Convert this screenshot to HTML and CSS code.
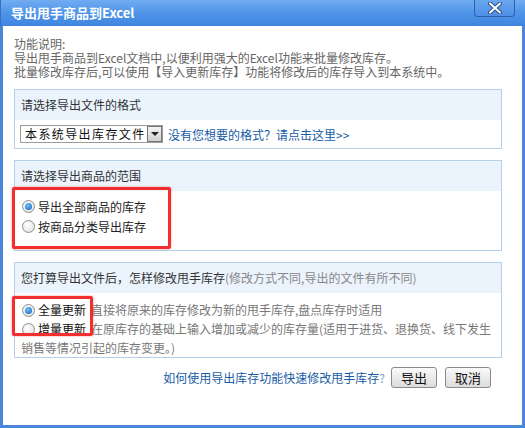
FILE: index.html
```html
<!DOCTYPE html>
<html lang="zh-CN">
<head>
  <meta charset="UTF-8">
  <title>导出甩手商品到Excel</title>
  <link rel="stylesheet" href="styles.css">
</head>
<body>
  <div class="window">
    <div class="titlebar">
      <span class="title">导出甩手商品到Excel</span>
      <a class="close" href="#">
        <svg width="18" height="12" viewBox="0 0 18 12">
          <path d="M4 1.5 L14 10.5 M14 1.5 L4 10.5" stroke="#2b4f86" stroke-width="4" stroke-linecap="round"/>
          <path d="M4 1.5 L14 10.5 M14 1.5 L4 10.5" stroke="#fff" stroke-width="2" stroke-linecap="round"/>
        </svg>
      </a>
    </div>

    <div class="content">
      <div class="intro">
        <p>功能说明:</p>
        <p>导出甩手商品到Excel文档中,以便利用强大的Excel功能来批量修改库存。</p>
        <p>批量修改库存后,可以使用【导入更新库存】功能将修改后的库存导入到本系统中。</p>
      </div>

      <div class="section">
        <div class="section-head">请选择导出文件的格式</div>
        <div class="section-body format-row">
          <div class="select">
            <span class="select-text">本系统导出库存文件</span>
            <span class="select-arrow"></span>
          </div>
          <a class="link" href="#">没有您想要的格式？请点击这里&gt;&gt;</a>
        </div>
      </div>

      <div class="section">
        <div class="section-head">请选择导出商品的范围</div>
        <div class="section-body range-body">
          <label class="option"><span class="radio checked"></span>导出全部商品的库存</label>
          <label class="option"><span class="radio"></span>按商品分类导出库存</label>
          <div class="mark mark-range"></div>
        </div>
      </div>

      <div class="section">
        <div class="section-head">您打算导出文件后，怎样修改甩手库存<span class="hint">(修改方式不同,导出的文件有所不同)</span></div>
        <div class="section-body mode-body">
          <div class="mode"><span class="radio checked"></span><b>全量更新</b><span class="desc">直接将原来的库存修改为新的甩手库存,盘点库存时适用</span></div>
          <div class="mode"><span class="radio"></span><b>增量更新</b><span class="desc">在原库存的基础上输入增加或减少的库存量(适用于进货、退换货、线下发生销售等情况引起的库存变更。)</span></div>
          <div class="mark mark-mode"></div>
        </div>
      </div>

      <div class="footer">
        <a class="link" href="#">如何使用导出库存功能快速修改甩手库存<span class="q">?</span></a>
        <button class="btn">导出</button>
        <button class="btn">取消</button>
      </div>
    </div>
  </div>
</body>
</html>
```

FILE: styles.css
```css
body {
  margin: 0;
  font-family: "Noto Sans CJK SC", "Liberation Sans", sans-serif;
  font-size: 12px;
  color: #333;
}

.window {
  width: 525px;
  height: 428px;
  display: flex;
  flex-direction: column;
  background-color: #4a87da;
}

.titlebar {
  height: 26px;
  display: flex;
  justify-content: space-between;
  align-items: flex-start;
  background: linear-gradient(#72acf2, #4f94e8 50%, #3f86e0);
  border-left: 1px solid #3470c4;
}

.title {
  color: #fff;
  font-weight: bold;
  font-size: 13px;
  line-height: 26px;
  padding-left: 10px;
}

.close {
  width: 41px;
  height: 17px;
  margin-right: 10px;
  box-sizing: border-box;
  display: flex;
  align-items: center;
  justify-content: center;
  border: 1px solid #2f5fa6;
  border-top: none;
  border-radius: 0 0 4px 4px;
  background: linear-gradient(#6aa6f0, #4e90e6);
}

.content {
  flex: 1;
  background-color: #fff;
  margin: 0 3px 3px 3px;
  padding: 11px 20px 0 11px;
}

.intro {
  color: #666;
  margin-bottom: 10px;
}

.intro p {
  margin: 0;
  height: 14px;
  line-height: 14px;
}

.section {
  border: 1px solid #b7cfec;
  margin-bottom: 11px;
}

.section-head {
  background-color: #ebf3fd;
  height: 30px;
  line-height: 30px;
  padding-left: 6px;
  color: #333;
}

.hint {
  color: #888;
}

.section-body {
  position: relative;
}

.format-row {
  display: flex;
  align-items: center;
  padding: 5px 5px;
}

.select {
  display: flex;
  width: 143px;
  height: 18px;
  box-sizing: border-box;
  border: 1px solid #9b9b9b;
  margin-right: 5px;
}

.select-text {
  flex: 1;
  font-size: 12px;
  line-height: 16px;
  padding-left: 4px;
  letter-spacing: 1.4px;
  color: #111;
  white-space: nowrap;
}

.select-arrow {
  width: 15px;
  box-sizing: border-box;
  border: 1px solid #777;
  background: linear-gradient(#f4f4f4, #cfcfcf);
  position: relative;
}

.select-arrow::after {
  content: "";
  position: absolute;
  left: 3px;
  top: 5px;
  border-left: 4px solid transparent;
  border-right: 4px solid transparent;
  border-top: 4px solid #222;
}

.link {
  color: #175ca6;
  text-decoration: none;
}

.range-body {
  padding: 5px 6px 14px 7px;
}

.option {
  display: flex;
  align-items: center;
  height: 20px;
  color: #222;
}

.radio {
  display: inline-block;
  width: 13px;
  height: 13px;
  box-sizing: border-box;
  border: 1px solid #8e8f8f;
  border-radius: 50%;
  background: radial-gradient(circle at 40% 35%, #fff, #dcdcdc);
  margin-right: 3px;
  flex: none;
  position: relative;
}

.radio.checked::after {
  content: "";
  position: absolute;
  left: 2px;
  top: 2px;
  width: 7px;
  height: 7px;
  border-radius: 50%;
  background: radial-gradient(circle at 40% 35%, #6fc2ff, #0a5fb0);
}

.mode-body {
  padding: 7px 6px 0 6px;
  line-height: 19px;
}

.mode .radio {
  vertical-align: -2px;
  margin-left: 1px;
}

.mode b {
  font-weight: normal;
  color: #111;
  margin-right: 5px;
}

.desc {
  color: #777;
}

.mark {
  position: absolute;
  border: 3px solid #f22e2e;
  border-radius: 2px;
  box-shadow: 0 0 2px rgba(242, 46, 46, 0.6);
}

.mark-range {
  left: -3px;
  top: -4px;
  width: 153px;
  height: 56px;
}

.mark-mode {
  left: -3px;
  top: 3px;
  width: 75px;
  height: 34px;
}

.footer {
  display: flex;
  justify-content: flex-end;
  align-items: center;
  gap: 6px;
  padding-right: 11px;
  margin-top: -2px;
}

.q {
  color: #7a9cc6;
}

.btn {
  width: 46px;
  height: 21px;
  padding: 0;
  font-family: "Noto Sans CJK SC", sans-serif;
  font-size: 13px;
  color: #111;
  border: 1px solid #8a8a8a;
  border-radius: 3px;
  background: linear-gradient(#fafafa, #dcdcdc);
  cursor: pointer;
}

.btn + .btn {
  margin-left: 2px;
}
```
